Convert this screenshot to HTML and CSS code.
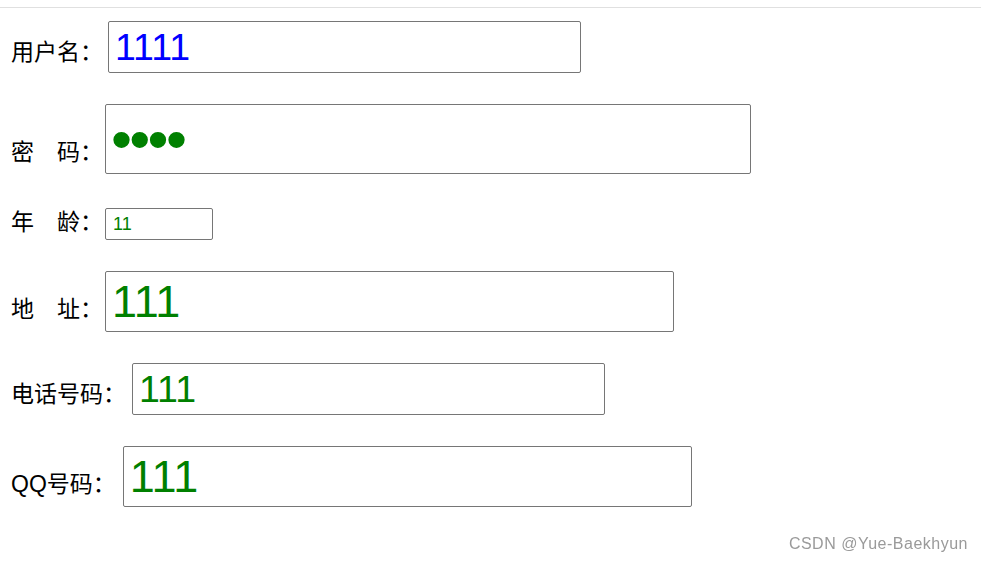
FILE: index.html
```html
<!DOCTYPE html>
<html lang="zh-CN">
<head>
  <meta charset="UTF-8">
  <meta name="viewport" content="width=device-width, initial-scale=1.0">
  <title>表单</title>

  <link rel="stylesheet" href="styles.css">
</head>
<body>
  <div class="page">
    <form class="reg-form">
      <div class="row row-user">
        <label for="username">用户名：</label>
        <input type="text" id="username" class="field field-blue" value="1111">
      </div>

      <div class="row row-pwd">
        <label for="password">密　码：</label>
        <input type="password" id="password" class="field field-pwd" value="1111">
      </div>

      <div class="row row-age">
        <label for="age">年　龄：</label>
        <input type="text" id="age" class="field field-age" value="11">
      </div>

      <div class="row row-addr">
        <label for="address">地　址：</label>
        <input type="text" id="address" class="field field-big" value="111">
      </div>

      <div class="row row-tel">
        <label for="tel">电话号码：</label>
        <input type="text" id="tel" class="field field-mid" value="111">
      </div>

      <div class="row row-qq">
        <label for="qq">QQ号码：</label>
        <input type="text" id="qq" class="field field-big" value="111">
      </div>
    </form>
  </div>

  <div class="watermark">CSDN @Yue-Baekhyun</div>
</body>
</html>
```

FILE: styles.css
```css
* {
  box-sizing: border-box;
}

body {
  margin: 0;
  font-family: "Liberation Sans", "Noto Sans CJK SC", sans-serif;
  background-color: #ffffff;
  color: #000;
}

/* thin rule across the top of the page */
.page {
  margin-top: 7px;
  border-top: 1px solid #e0e0e0;
}

.reg-form {
  display: flex;
  flex-direction: column;
  align-items: flex-start;
  gap: 31px;
  padding: 13px 0 0 11px;
}

.row {
  display: flex;
  align-items: baseline;
}

.row label {
  font-size: 23px;
  line-height: 1;
}

.field {
  border: 1px solid #767676;
  border-radius: 2px;
  padding: 0 6px;
  font-family: "Liberation Sans", sans-serif;
  color: green;
  background: #fff;
  outline: none;
}

/* per row sizes */
.row-user .field { margin-left: 5px; width: 473px; height: 52px; }
.row-pwd .field  { margin-left: 2px; width: 646px; height: 70px; padding: 0 5px; }
.row-age .field  { margin-left: 2px; width: 108px; height: 32px; padding: 0 7px; }
.row-addr .field { margin-left: 2px; width: 569px; height: 61px; }
.row-tel .field  { margin-left: 6px; width: 473px; height: 52px; }
.row-qq .field   { margin-left: 7px; width: 569px; height: 61px; }

.row-age {
  margin-top: 3px;
}

.field-blue {
  color: blue;
  font-size: 37.5px;
}

.field-pwd {
  font-size: 60px;
  letter-spacing: -2.7px;
}

.field-age {
  font-size: 18px;
}

.field-mid {
  font-size: 37.5px;
}

.field-big {
  font-size: 45px;
}

.watermark {
  position: fixed;
  right: 13px;
  bottom: 9px;
  font-size: 16px;
  letter-spacing: 0.5px;
  color: #9a9a9a;
}
```
